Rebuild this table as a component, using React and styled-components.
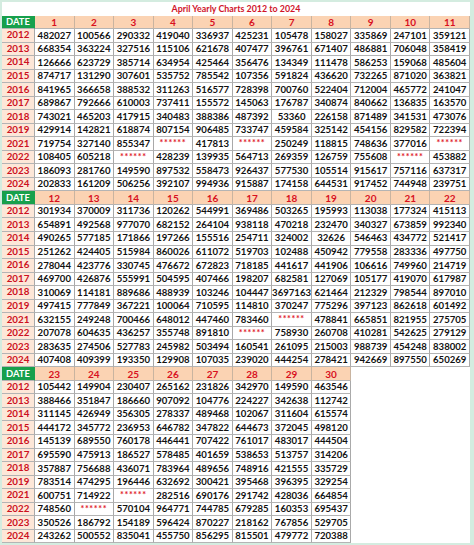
import React from "react";
import styled, { createGlobalStyle } from "styled-components";

const Global = createGlobalStyle`
  html, body { margin: 0; padding: 0; }
  body {
    background: #d4ece0;
    width: 474px;
    height: 545px;
    overflow: hidden;
    font-family: "Lato", "Liberation Sans", sans-serif;
  }
`;

const YEARS = ["2012", "2013", "2014", "2015", "2016", "2017", "2018", "2019", "2021", "2022", "2023", "2024"];

const BLOCKS = [
  {
    days: [1, 2, 3, 4, 5, 6, 7, 8, 9, 10, 11],
    rows: [
      "482027 100566 290332 419040 336937 425231 105478 158027 335869 247101 359121",
      "668354 363224 327516 115106 621678 407477 396761 671407 486881 706048 358419",
      "126666 623729 385714 634954 425464 356476 134349 111478 586253 159068 485604",
      "874717 131290 307601 535752 785542 107356 591824 436620 732265 871020 363821",
      "841965 366658 388532 311263 516577 728398 700760 522404 712004 465772 241047",
      "689867 792666 610003 737411 155572 145063 176787 340874 840662 136835 163570",
      "743021 465203 417915 340483 388386 487392 53360 226158 871489 341531 473076",
      "429914 142821 618874 807154 906485 733747 459584 325142 454156 829582 722394",
      "719754 327140 855347 ****** 417813 ****** 250249 118815 748636 377016 ******",
      "108405 605218 ****** 428239 139935 564713 269359 126759 755608 ****** 453882",
      "186093 281760 149590 897532 558473 926437 577530 105514 915617 757116 637317",
      "202833 161209 506256 392107 994936 915887 174158 644531 917452 744948 239751",
    ],
  },
  {
    days: [12, 13, 14, 15, 16, 17, 18, 19, 20, 21, 22],
    rows: [
      "301934 370009 311736 120262 544991 369486 503265 195993 113038 177324 415113",
      "654891 492568 977070 682152 264104 938118 470218 232470 340327 673859 992340",
      "490265 577185 171866 197266 155516 254711 324002 32626 546463 434772 521417",
      "251262 424405 515984 860026 611072 519703 102488 450942 779558 283336 497750",
      "278044 423776 330745 476672 672823 718185 441617 441906 106616 749960 214719",
      "469700 426876 555991 504595 407466 198207 682581 127069 105177 419070 617987",
      "310069 114181 889686 488939 103246 104447 3697163 621464 212329 798544 897010",
      "497415 777849 367221 100064 710595 114810 370247 775296 397123 862618 601492",
      "632155 249248 700466 648012 447460 783460 ****** 478841 665851 821955 275705",
      "207078 604635 436257 355748 891810 ****** 758930 260708 410281 542625 279129",
      "283635 274506 527783 245982 503494 160541 261095 215003 988739 454248 838002",
      "407408 409399 193350 129908 107035 239020 444254 278421 942669 897550 650269",
    ],
  },
  {
    days: [23, 24, 25, 26, 27, 28, 29, 30],
    rows: [
      "105442 149904 230407 265162 231826 342970 149590 463546",
      "388466 351847 186660 907092 104776 224227 342638 112742",
      "311145 426949 356305 278337 489468 102067 311604 615574",
      "444172 345772 236953 646782 347822 644673 372045 498120",
      "145139 689550 760178 446441 707422 761017 483017 444504",
      "695590 475913 186527 578485 401659 538653 513757 314206",
      "357887 756688 436071 783964 489656 748916 421555 335729",
      "783514 474295 196446 632692 300421 395468 396395 329254",
      "600751 714922 ****** 282516 690176 291742 428036 664854",
      "748560 ****** 570104 964771 744785 679285 160353 695437",
      "350526 186792 154189 596424 870227 218162 767856 529705",
      "243262 500552 835041 455750 856295 815501 479772 720388",
    ],
  },
];

const Sheet = styled.div`
  margin: 2px 0 0 2px;
  width: 468px;
  background: #ffffff;
`;

const Title = styled.div`
  height: 13.5px;
  display: flex;
  align-items: center;
  justify-content: center;
  color: #d0142a;
  font-weight: 700;
  font-size: 8.9px;
`;

const Grid = styled.div`
  display: grid;
  grid-template-columns: 33px repeat(11, 1fr);
  grid-auto-rows: 13.54px;
`;

const Cell = styled.div`
  box-sizing: border-box;
  display: flex;
  align-items: center;
  justify-content: center;
  border-right: 1px solid #a9a9a9;
  border-bottom: 1px solid #b4b4b4;
  font-weight: 700;
  font-size: 9.6px;
  line-height: 1;
  white-space: nowrap;
  overflow: hidden;
`;

const DateHead = styled(Cell)`
  background: #17a04c;
  color: #ffffff;
  font-size: 9.4px;
  border-right-color: #17a04c;
`;

const DayHead = styled(Cell)`
  background: #fbd3b3;
  color: #d8101e;
  font-size: 10px;
  border-right-color: #c9b4a0;
`;

const YearCell = styled(Cell)`
  background: #fde7d8;
  color: #cc1020;
  font-size: 9.8px;
`;

const ValueCell = styled(Cell)`
  background: #ffffff;
  color: ${(p) => (p.$star ? "#e01828" : "#111111")};
  align-items: ${(p) => (p.$star ? "flex-start" : "center")};
  padding-top: ${(p) => (p.$star ? "1px" : "0")};
  letter-spacing: ${(p) => (p.$star ? "0.6px" : "0")};
  font-size: ${(p) => (p.$star ? "9px" : "9.6px")};
`;

const Filler = styled.div`
  background: #ffffff;
`;

function Block({ days, rows }) {
  const pad = 11 - days.length;
  return (
    <Grid>
      <DateHead>DATE</DateHead>
      {days.map((d) => (
        <DayHead key={d}>{d}</DayHead>
      ))}
      {pad > 0 && <Filler style={{ gridColumn: `span ${pad}` }} />}
      {rows.map((r, i) => {
        const vals = r.split(" ");
        return (
          <React.Fragment key={YEARS[i]}>
            <YearCell>{YEARS[i]}</YearCell>
            {vals.map((v, j) => (
              <ValueCell key={j} $star={v.startsWith("*")}>
                {v}
              </ValueCell>
            ))}
            {pad > 0 && <Filler style={{ gridColumn: `span ${pad}` }} />}
          </React.Fragment>
        );
      })}
    </Grid>
  );
}

export default function App() {
  return (
    <>
      <Global />
      <Sheet>
        <Title>April Yearly Charts 2012 to 2024</Title>
        {BLOCKS.map((b) => (
          <Block key={b.days[0]} days={b.days} rows={b.rows} />
        ))}
      </Sheet>
    </>
  );
}
